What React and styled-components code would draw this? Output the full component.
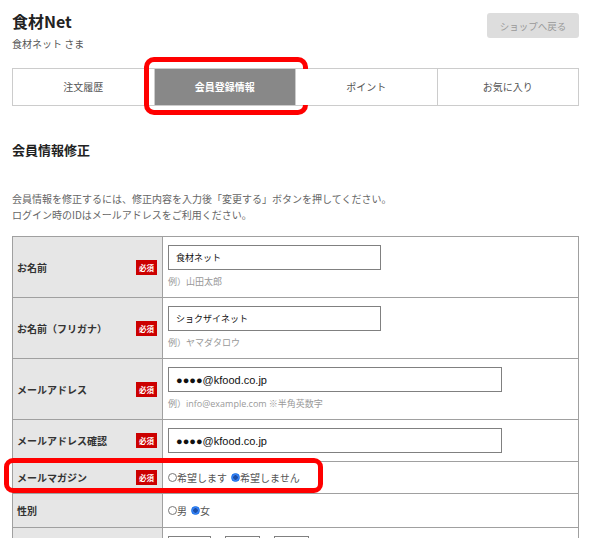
import React from 'react'
import styled, { createGlobalStyle } from 'styled-components'

const GlobalStyle = createGlobalStyle`
    body {
        margin: 0;
        background: #fff;
        font-family: "Noto Sans CJK JP", "Noto Sans", sans-serif;
        color: #333;
    }
`

const tabs = ['注文履歴', '会員登録情報', 'ポイント', 'お気に入り']

function App() {
    return <Page>
        <GlobalStyle />

        { /* Header */}
        <Header>
            <div>
                <Title>食材Net</Title>
                <UserName>食材ネット さま</UserName>
            </div>
            <BackButton>ショップへ戻る</BackButton>
        </Header>

        { /* Tabs */}
        <Tabs>
            {tabs.map((t, i) => (
                <Tab key={t} active={i === 1}>
                    {t}
                    {i === 1 && <TabMark />}
                </Tab>
            ))}
        </Tabs>

        <Heading>会員情報修正</Heading>
        <Lead>
            会員情報を修正するには、修正内容を入力後「変更する」ボタンを押してください。<br />
            ログイン時のIDはメールアドレスをご利用ください。
        </Lead>

        { /* Form table */}
        <Form>
            <Row>
                <LabelCell>お名前<Required>必須</Required></LabelCell>
                <FieldCell>
                    <TextInput width={213} defaultValue="食材ネット" />
                    <Hint>例）山田太郎</Hint>
                </FieldCell>
            </Row>
            <Row>
                <LabelCell>お名前（フリガナ）<Required>必須</Required></LabelCell>
                <FieldCell>
                    <TextInput width={213} defaultValue="ショクザイネット" />
                    <Hint>例）ヤマダタロウ</Hint>
                </FieldCell>
            </Row>
            <Row>
                <LabelCell>メールアドレス<Required>必須</Required></LabelCell>
                <FieldCell>
                    <TextInput width={334} latin defaultValue="●●●●@kfood.co.jp" />
                    <Hint>例）info@example.com<Note> ※半角英数字</Note></Hint>
                </FieldCell>
            </Row>
            <Row>
                <LabelCell>メールアドレス確認<Required>必須</Required></LabelCell>
                <FieldCell>
                    <TextInput width={334} latin defaultValue="●●●●@kfood.co.jp" />
                </FieldCell>
            </Row>
            <Row>
                <LabelCell>メールマガジン<Required>必須</Required></LabelCell>
                <FieldCell pad={8}>
                    <RadioGroup>
                        <RadioItem><Radio />希望します</RadioItem>
                        <RadioItem><Radio checked />希望しません</RadioItem>
                    </RadioGroup>
                </FieldCell>
                <RowMark />
            </Row>
            <Row>
                <LabelCell>性別</LabelCell>
                <FieldCell pad={9}>
                    <RadioGroup>
                        <RadioItem><Radio />男</RadioItem>
                        <RadioItem><Radio checked />女</RadioItem>
                    </RadioGroup>
                </FieldCell>
            </Row>
            <Row>
                <LabelCell />
                <FieldCell>
                    <DateFields>
                        <TextInput width={43} />
                        <TextInput width={35} />
                        <TextInput width={35} />
                    </DateFields>
                </FieldCell>
            </Row>
        </Form>
    </Page>
}

export default App

const Page = styled.div`
    padding: 10px 11px 0 12px;
`

const Header = styled.div`
    display: flex;
    justify-content: space-between;
    align-items: flex-start;
`

const Title = styled.h1`
    margin: 0;
    font-size: 16px;
    line-height: 22px;
    font-weight: 700;
    color: #222;
`

const UserName = styled.div`
    margin-top: 5px;
    font-size: 10px;
    line-height: 14px;
    color: #555;
`

const BackButton = styled.button`
    margin-top: 3px;
    width: 92px;
    height: 25px;
    border: none;
    border-radius: 3px;
    background: #dddddd;
    color: #999;
    font-family: inherit;
    font-size: 9.5px;
    padding: 0;
`

const Tabs = styled.div`
    display: flex;
    margin-top: 17px;
    height: 38px;
    border: 1px solid #cccccc;
    box-sizing: border-box;
`

const Tab = styled.div`
    position: relative;
    flex: 1;
    display: flex;
    align-items: center;
    justify-content: center;
    padding-bottom: 2px;
    font-size: 10px;
    color: ${p => (p.active ? '#fff' : '#555')};
    font-weight: ${p => (p.active ? 700 : 400)};
    background: ${p => (p.active ? '#888888' : '#fff')};

    & + & {
        border-left: 1px solid #cccccc;
    }
`

const TabMark = styled.span`
    position: absolute;
    top: -12px;
    bottom: -10px;
    left: -11px;
    right: -13px;
    border: 5px solid #ff0000;
    border-radius: 10px;
    pointer-events: none;
`

const Heading = styled.h2`
    margin: 35px 0 0;
    font-size: 13px;
    line-height: 18px;
    font-weight: 700;
    color: #222;
`

const Lead = styled.p`
    margin: 32px 0 0;
    font-size: 10px;
    line-height: 16px;
    color: #666;
`

const Form = styled.div`
    margin-top: 13px;
    border: 1px solid #a0a0a0;
    border-bottom: none;
`

const Row = styled.div`
    position: relative;
    display: grid;
    grid-template-columns: 150px 1fr;
    border-bottom: 1px solid #a0a0a0;
`

const LabelCell = styled.div`
    display: flex;
    align-items: center;
    justify-content: space-between;
    padding: 0 5px 0 4px;
    background: #e6e6e6;
    border-right: 1px solid #a0a0a0;
    font-size: 10px;
    font-weight: 700;
    color: #333;
`

const Required = styled.span`
    display: inline-flex;
    align-items: center;
    justify-content: center;
    width: 21px;
    height: 15px;
    background: #cc0000;
    color: #fff;
    font-size: 7.5px;
    font-weight: 700;
`

const FieldCell = styled.div`
    padding: ${p => p.pad || 8}px 6px ${p => p.pad || 8}px 5px;
`

const TextInput = styled.input`
    display: block;
    box-sizing: border-box;
    width: ${p => p.width}px;
    height: 25px;
    border: 1px solid #808080;
    padding: 0 7px;
    font-family: ${p => (p.latin ? '"Liberation Sans", "Noto Sans CJK JP", sans-serif' : 'inherit')};
    font-size: ${p => (p.latin ? '11px' : '9px')};
    color: #111;
    outline: none;
`

const Hint = styled.div`
    margin-top: 5px;
    font-size: 9px;
    line-height: 14px;
    color: #999;
    font-family: "Open Sans", "Noto Sans CJK JP", sans-serif;
`

const Note = styled.span`
    font-family: "Noto Sans CJK JP", sans-serif;
`

const RadioGroup = styled.div`
    display: flex;
    gap: 4px;
    font-size: 10px;
    line-height: 15px;
    color: #555;
`

const RadioItem = styled.label`
    display: flex;
    align-items: center;
`

const Radio = styled.span`
    display: inline-block;
    box-sizing: border-box;
    width: 9px;
    height: 9px;
    border-radius: 50%;
    border: 1px solid ${p => (p.checked ? '#1a73e8' : '#777')};
    background: ${p => (p.checked ? 'radial-gradient(circle, #1a4fa8 0 2px, #3b82f6 2.5px)' : '#fff')};
`

const RowMark = styled.span`
    position: absolute;
    left: -9px;
    top: -4px;
    width: 319px;
    height: 35px;
    box-sizing: border-box;
    border: 5px solid #ff0000;
    border-radius: 9px;
    pointer-events: none;
`

const DateFields = styled.div`
    display: flex;
    gap: 14px;
`
